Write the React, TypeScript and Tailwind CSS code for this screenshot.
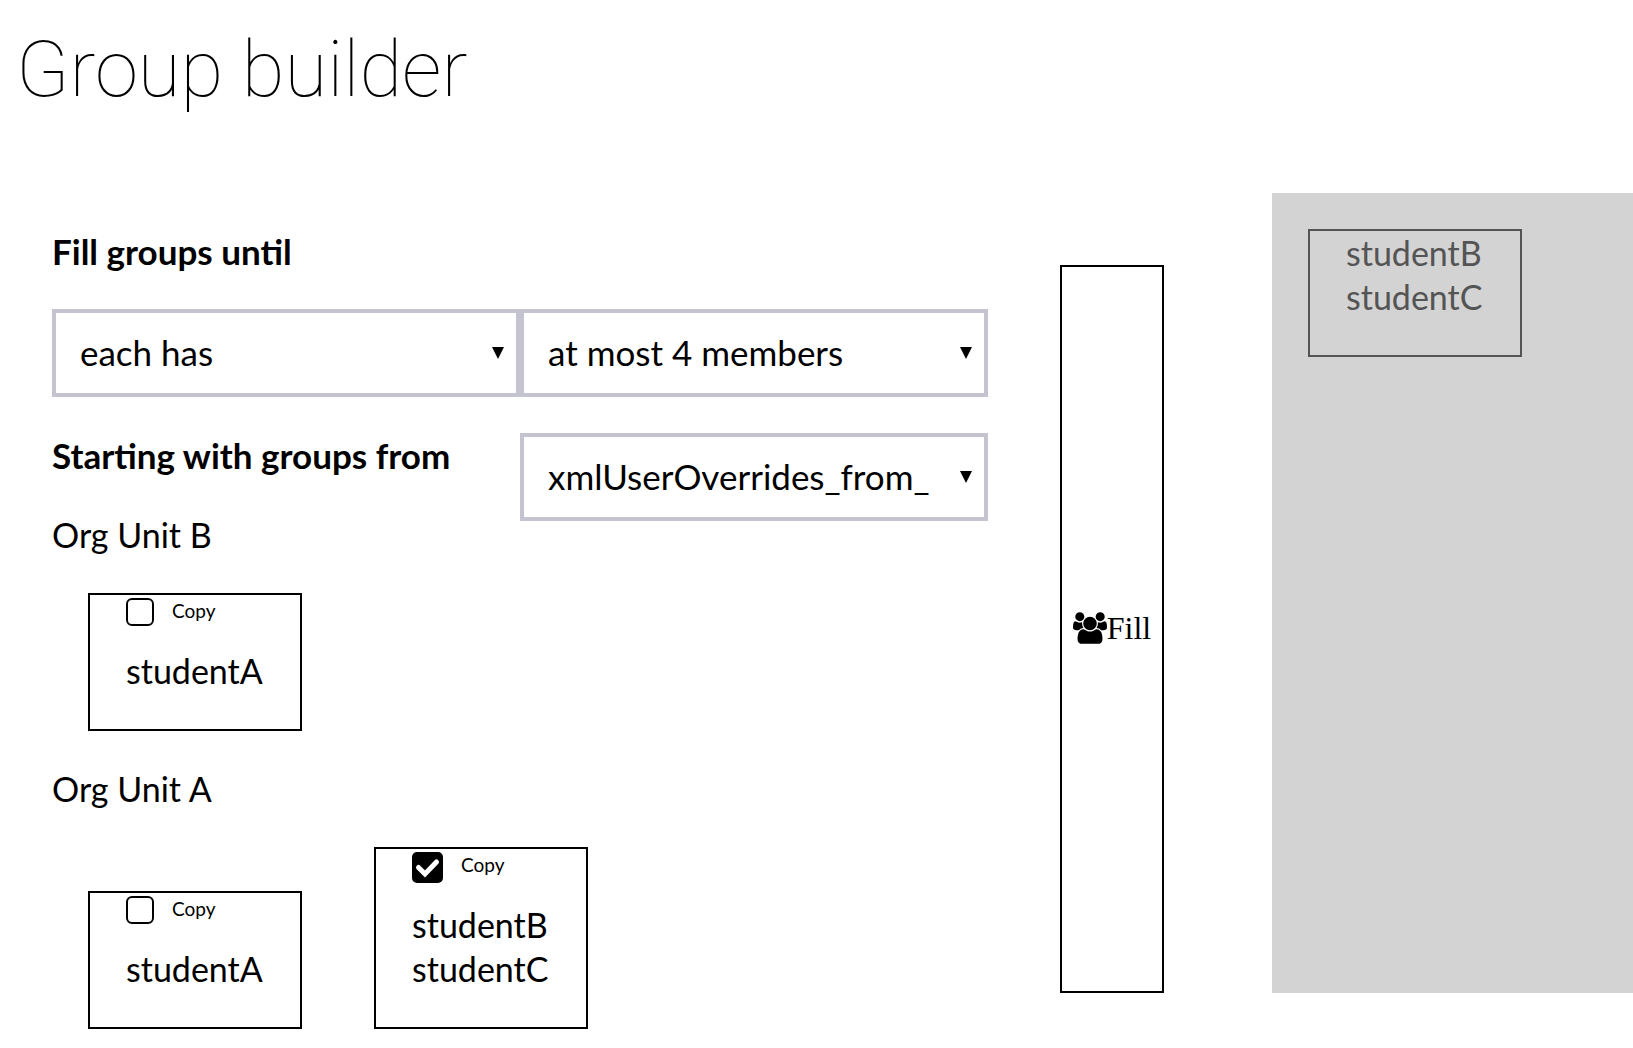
import { useState } from "react";

const unitB = [{ id: "b1", copied: false, students: ["studentA"] }];
const unitA = [
  { id: "a1", copied: false, students: ["studentA"] },
  { id: "a2", copied: true, students: ["studentB", "studentC"] },
];

function Select({ label, value }: { label: string; value: string }) {
  return (
    <div className="relative min-w-0">
      <select
        aria-label={label}
        defaultValue={value}
        className="block h-[88px] w-full appearance-none border-4 border-[#c4c3d0] bg-white pr-12 pb-0.5 pl-6 text-[35px] text-black"
      >
        <option>{value}</option>
      </select>
      <svg viewBox="0 0 12 12" className="pointer-events-none absolute top-[38px] right-4 size-3" aria-hidden="true">
        <path d="M0 0H12L6 12Z" />
      </svg>
    </div>
  );
}

function CopyBox({ initial }: { initial: boolean }) {
  const [on, setOn] = useState(initial);
  return (
    <label className="flex h-[54px] items-start gap-[18px] pt-[3px] text-[19px] leading-[26px]">
      <span className="relative flex">
        <input
          type="checkbox"
          checked={on}
          onChange={() => setOn(!on)}
          className="peer size-7 appearance-none rounded-md border-2 border-black checked:size-[31px] checked:rounded-[5px] checked:bg-black"
        />
        <svg
          viewBox="0 0 31 31"
          className="pointer-events-none absolute inset-0 hidden size-[31px] peer-checked:block"
          aria-hidden="true"
        >
          <path
            d="M6.5 15.5L13 22L24.5 10"
            fill="none"
            stroke="white"
            strokeWidth="5"
            strokeLinecap="round"
          />
        </svg>
      </span>
      Copy
    </label>
  );
}

function Card({ students, copied }: { students: string[]; copied: boolean }) {
  return (
    <div className="w-[214px] border-2 border-black px-9 pb-9">
      <CopyBox initial={copied} />
      <ul>
        {students.map((s) => (
          <li key={s}>{s}</li>
        ))}
      </ul>
    </div>
  );
}

function Unit({ name, groups }: { name: string; groups: typeof unitA }) {
  return (
    <section>
      <p>{name}</p>
      <div className="flex items-end gap-[72px] px-9 py-9">
        {groups.map((g) => (
          <Card key={g.id} students={g.students} copied={g.copied} />
        ))}
      </div>
    </section>
  );
}

export default function App() {
  return (
    <main className="bg-white font-['Lato',sans-serif] text-[34px] leading-[44px] text-black">
      <h1 className="h-[193px] pt-3.5 pl-4 font-['Roboto',sans-serif] text-[78px] leading-[112px] font-thin">
        Group builder
      </h1>
      <div className="flex items-start pl-[52px]">
        <div className="min-w-0 flex-[936] pt-9">
          <h2 className="text-[35px] font-bold">Fill groups until</h2>
          <div className="mt-9 grid grid-cols-2">
            <Select label="Group rule" value="each has" />
            <Select label="Group size" value="at most 4 members" />
          </div>
          <div className="mt-9 grid h-20 grid-cols-2">
            <h2 className="text-[35px] font-bold">Starting with groups from</h2>
            <Select label="Starting groups" value="xmlUserOverrides_from_" />
          </div>
          <Unit name="Org Unit B" groups={unitB} />
          <Unit name="Org Unit A" groups={unitA} />
        </div>
        <button
          type="button"
          className="mt-[72px] mr-[108px] ml-[72px] flex h-[728px] w-[104px] shrink-0 items-center justify-center border-2 border-black pb-0.5 font-['Liberation_Serif',serif] text-[32px]"
        >
          <svg viewBox="0 0 1920 1792" className="h-8 w-[34px] shrink-0" aria-hidden="true">
            <path d="M593 896q-162 5-265 128h-134q-82 0-138-40.5t-56-118.5q0-353 124-353 6 0 43.5 21t97.5 42.5 119 21.5q67 0 133-23-5 37-5 66 0 139 81 256zm1071 637q0 120-73 189.5t-194 69.5h-874q-121 0-194-69.5t-73-189.5q0-53 3.5-103.5t14-109 26.5-108.5 43-97.5 62-81 85.5-53.5 111.5-20q10 0 43 21.5t73 48 107 48 135 21.5 135-21.5 107-48 73-48 43-21.5q61 0 111.5 20t85.5 53.5 62 81 43 97.5 26.5 108.5 14 109 3.5 103.5zm-1024-1277q0 106-75 181t-181 75-181-75-75-181 75-181 181-75 181 75 75 181zm704 384q0 159-112.5 271.5t-271.5 112.5-271.5-112.5-112.5-271.5 112.5-271.5 271.5-112.5 271.5 112.5 112.5 271.5zm576 225q0 78-56 118.5t-138 40.5h-134q-103-123-265-128 81-117 81-256 0-29-5-66 66 23 133 23 59 0 119-21.5t97.5-42.5 43.5-21q124 0 124 353zm-128-609q0 106-75 181t-181 75-181-75-75-181 75-181 181-75 181 75 75 181z" />
          </svg>
          Fill
        </button>
        <aside className="flex min-h-[800px] min-w-0 flex-[361] items-start bg-[#d3d3d3]">
          <ul className="m-9 w-[214px] border-2 border-[#545454] px-9 pb-9 text-[#545454]">
            <li>studentB</li>
            <li>studentC</li>
          </ul>
        </aside>
      </div>
    </main>
  );
}
